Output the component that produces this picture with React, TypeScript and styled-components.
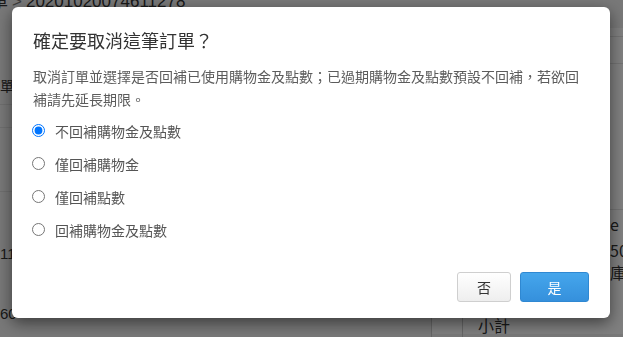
import styled, { createGlobalStyle } from "styled-components";

const GlobalStyle = createGlobalStyle`
  html, body {
    margin: 0;
    padding: 0;
    background: #f0f0f0;
    overflow: hidden;
  }
  body {
    font-family: "Noto Sans CJK TC", "Liberation Sans", sans-serif;
  }
`;

const Page = styled.div`
  width: 623px;
  height: 337px;
  overflow: hidden;
  color: #333;
`;

const Breadcrumb = styled.div`
  margin: -8px 0 0 -9px;
  height: 20px;
  font-size: 17px;
  line-height: 20px;
  font-family: "Liberation Sans", "Noto Sans CJK TC", sans-serif;
  white-space: nowrap;

  span {
    color: #777;
    margin: 0 4px;
  }
`;

const Columns = styled.div`
  display: grid;
  grid-template-columns: 431px 1fr;
  margin-top: -5px;
`;

const LeftPane = styled.div`
  display: flex;
  flex-direction: column;
`;

const PaneHeading = styled.div`
  padding: 68px 0 0 0;
  margin-left: -14px;
  height: 29px;
  font-size: 14px;
  line-height: 20px;
  border-bottom: 1px solid #ddd;
`;

const InfoRow = styled.div<{ h: number }>`
  height: ${(p) => p.h}px;
  border-bottom: 1px solid #ddd;
`;

const PlainRow = styled.div<{ h: number; offset?: number }>`
  height: ${(p) => p.h}px;
  box-sizing: border-box;
  padding-top: ${(p) => p.offset ?? 0}px;
  font-size: 15px;
  font-family: "Liberation Sans", sans-serif;
  display: flex;
  align-items: center;
  white-space: nowrap;
`;

const RightPane = styled.div`
  display: flex;
  flex-direction: column;
  background: #fff;
  margin-top: 21px;
`;

const RightLine = styled.div<{ h: number }>`
  height: ${(p) => p.h}px;
  border-bottom: 1px solid #e4e4e4;
`;

const RightText = styled.div<{ h: number }>`
  height: ${(p) => p.h}px;
  display: flex;
  align-items: center;
  padding-left: 179px;
  font-size: 16px;
  white-space: nowrap;
`;

const TotalRow = styled.div`
  display: grid;
  grid-template-columns: 31px 1fr;
  height: 40px;
  margin-top: 12px;
`;

const TotalCell = styled.div`
  border-left: 1px solid #ccc;
  padding: 19px 0 0 15px;
  font-size: 16px;
`;

const Overlay = styled.div`
  position: fixed;
  inset: 0;
  background: rgba(0, 0, 0, 0.5);
  padding: 7px 0 0 12px;
`;

const Dialog = styled.div`
  width: 598px;
  height: 311px;
  box-sizing: border-box;
  background: #fff;
  border-radius: 6px;
  box-shadow: 0 5px 15px rgba(0, 0, 0, 0.5);
  padding: 21px 21px 16px 21px;
  display: flex;
  flex-direction: column;
`;

const Title = styled.h4`
  margin: 0;
  font-size: 18px;
  line-height: 24px;
  font-weight: 400;
  color: #333;
`;

const Description = styled.p`
  margin: 13px 0 0 0;
  font-size: 14px;
  line-height: 23px;
  color: #5c5c5c;
`;

const Options = styled.div`
  margin-top: 3px;
  display: flex;
  flex-direction: column;
`;

const Option = styled.label`
  height: 33px;
  display: flex;
  align-items: center;
  font-size: 14px;
  color: #555;
  cursor: pointer;

  input {
    width: 13px;
    height: 13px;
    margin: 0 10px 0 -1px;
  }
`;

const Footer = styled.div`
  margin-top: auto;
  display: flex;
  justify-content: flex-end;
  gap: 9px;
`;

const Button = styled.button<{ primary?: boolean }>`
  height: 30px;
  width: ${(p) => (p.primary ? 69 : 54)}px;
  box-sizing: border-box;
  border-radius: 3px;
  font-family: "Noto Sans CJK TC", sans-serif;
  font-size: 14px;
  padding: 0;
  cursor: pointer;
  border: 1px solid ${(p) => (p.primary ? "#2f88d2" : "#cfcfcf")};
  color: ${(p) => (p.primary ? "#fff" : "#333")};
  background: ${(p) =>
    p.primary
      ? "linear-gradient(#45a6ec, #3590dc)"
      : "linear-gradient(#ffffff, #eeeeee)"};
`;

const options = ["不回補購物金及點數", "僅回補購物金", "僅回補點數", "回補購物金及點數"];

export default function App() {
  return (
    <>
      <GlobalStyle />
      <Page>
        <Breadcrumb>
          單<span>&gt;</span>20201020074611278
        </Breadcrumb>
        <Columns>
          <LeftPane>
            <PaneHeading>訂單資訊</PaneHeading>
            <InfoRow h={22} />
            <InfoRow h={63} />
            <PlainRow h={98} offset={24}>1120</PlainRow>
            <PlainRow h={34} offset={12}>60</PlainRow>
          </LeftPane>
          <RightPane>
            <RightLine h={8} />
            <RightLine h={26} />
            <RightLine h={145} />
            <RightText h={28}>e</RightText>
            <RightText h={24}>50</RightText>
            <RightText h={20}>庫</RightText>
            <TotalRow>
              <TotalCell />
              <TotalCell>小計</TotalCell>
            </TotalRow>
          </RightPane>
        </Columns>
      </Page>
      <Overlay>
        <Dialog role="dialog">
          <Title>確定要取消這筆訂單？</Title>
          <Description>
            取消訂單並選擇是否回補已使用購物金及點數；已過期購物金及點數預設不回補，若欲回補請先延長期限。
          </Description>
          <Options>
            {options.map((label, i) => (
              <Option key={label}>
                <input type="radio" name="refund" defaultChecked={i === 0} />
                {label}
              </Option>
            ))}
          </Options>
          <Footer>
            <Button>否</Button>
            <Button primary>是</Button>
          </Footer>
        </Dialog>
      </Overlay>
    </>
  );
}
